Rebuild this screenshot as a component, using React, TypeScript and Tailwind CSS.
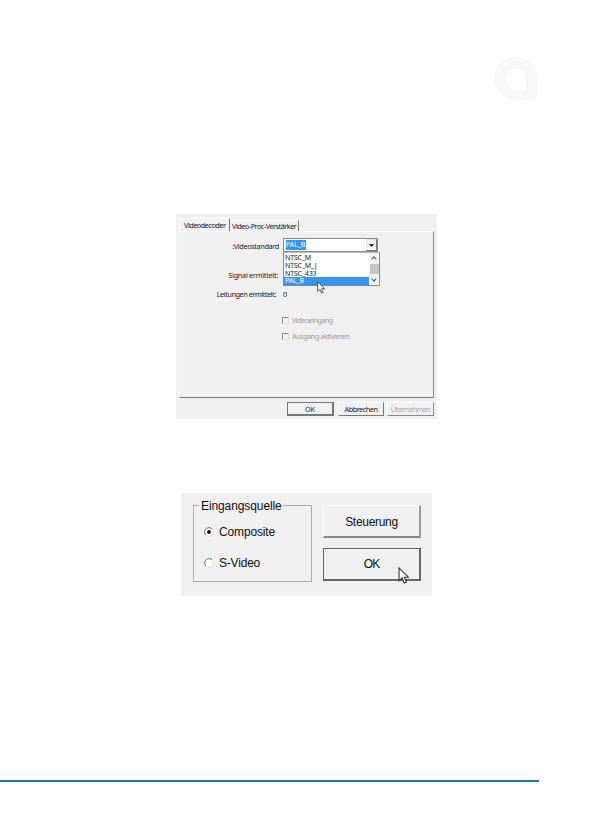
import React from "react";

function Cursor({ className }: { className: string }) {
  return (
    <svg className={className} viewBox="0 0 12 19" fill="#fff" stroke="#333" strokeWidth="1.2">
      <path d="M1 1v14.5l3.4-3.2 2.4 5.5 2.5-1.1-2.4-5.3h4.6z" />
    </svg>
  );
}

function Logo() {
  return (
    <svg className="h-[44px] w-[44px]" viewBox="0 0 44 44" fill="#f8f8f8">
      <path
        fillRule="evenodd"
        d="M22 0C35 0 43 9 43 21v17q0 5-4 5H22C9 43 0 34 0 22S9 0 22 0zM22 12c-6 0-10.500 4.500-10.500 10.500S16 33 22 33h8q2 0 2-2v-9c0-6-4-10-10-10z"
      />
    </svg>
  );
}

function Check({ label, className }: { label: string; className: string }) {
  return (
    <div className="flex h-[8px] items-center gap-[3px] text-[#9b9b9b]">
      <span className="h-[7px] w-[7px] border-t border-l border-[#8c8c8c] border-r border-r-[#e2e2e2] border-b border-b-[#e2e2e2] bg-[#f3f3f3]" />
      <span className={className}>{label}</span>
    </div>
  );
}

function Radio({ label, checked, className }: { label: string; checked?: boolean; className: string }) {
  return (
    <div className="flex h-[12px] items-center">
      <svg className="h-[10px] w-[10px]" viewBox="0 0 10 10">
        <circle cx="5" cy="5" r="4.3" fill="#fff" stroke="#d6d6d6" strokeWidth="0.8" />
        <path d="M1.9 8.1A4.3 4.3 0 0 1 8.1 1.9" fill="none" stroke="#777" strokeWidth="1" />
        {checked && <circle cx="5" cy="5" r="1.9" fill="#111" />}
      </svg>
      <span className={"ml-[5px] " + className}>{label}</span>
    </div>
  );
}

function DecoderDialog() {
  return (
    <section className="ml-[176px] mt-[113px] flex h-[205px] w-[261px] flex-col bg-[#f0f0f0] font-['Noto_Sans',sans-serif] text-[7.3px] leading-[8px] whitespace-nowrap text-[#222]">
      <div className="flex h-[17px] items-end pl-[3px]">
        <div className="flex h-[13px] w-[51px] items-center border-t border-l border-t-[#fafafa] border-l-[#fafafa] border-r border-r-[#777] pl-[4px]">
          <span className="tracking-[-0.5px]">Videodecoder</span>
        </div>
        <div className="flex h-[11px] w-[69px] items-center border-t border-t-[#fafafa] border-r border-r-[#777] pl-[2px]">
          <span className="tracking-[-0.5px]">Video-Proc-Verstärker</span>
        </div>
      </div>
      <div className="ml-[3px] flex h-[167px] w-[255px] flex-col border-t border-l border-t-[#fafafa] border-l-[#f4f4f4] border-r border-r-[#888] border-b border-b-[#777] pt-[6px]">
        <div className="flex h-[14px]">
          <span className="mt-[4px] w-[99px] text-right tracking-[-0.36px]">:Videostandard</span>
          <div className="ml-[4px] flex w-[95px] flex-col">
            <div className="flex h-[14px] shrink-0 justify-between border border-[#8a8a8a] bg-white pl-[2px]">
              <span className="mt-[1px] h-[10px] w-[20px] bg-[#3296f5] text-[7px] leading-[9px] tracking-[-0.1px] text-white">PAL_B</span>
              <span className="flex h-[12px] w-[11px] items-center justify-center border border-[#e4e4e4] border-r-[#777] border-b-[#777] bg-[#f4f4f4]">
                <svg className="h-[3px] w-[5px]" viewBox="0 0 6 3"><path d="M0 0h6L3 3z" fill="#000" /></svg>
              </span>
            </div>
            <div className="relative z-10 flex h-[34px] w-[97px] shrink-0 border border-t-[#bbb] border-[#888] bg-white">
              <div className="w-[85px] pt-px text-[7px] leading-[8px] tracking-[-0.15px]">
                <div className="flex h-[8px] items-center pl-px">NTSC_M</div>
                <div className="flex h-[8px] items-center pl-px">NTSC_M_J</div>
                <div className="flex h-[7px] items-center pl-px">NTSC_433</div>
                <div className="flex h-[8px] items-center bg-[#3296f5] pl-px text-white">PAL_B</div>
              </div>
              <div className="flex w-[10px] flex-col items-center justify-between bg-[#f2f2f2] py-[3px]">
                <svg className="h-[4px] w-[6px]" viewBox="0 0 6 4"><path d="M.7 3.5L3 .8l2.3 2.7" fill="none" stroke="#555" strokeWidth="1.1" /></svg>
                <span className="h-[10px] w-[9px] bg-[#c6c6c6]" />
                <svg className="h-[4px] w-[6px]" viewBox="0 0 6 4"><path d="M.7 .5L3 3.2 5.3 .5" fill="none" stroke="#555" strokeWidth="1.1" /></svg>
              </div>
              <Cursor className="absolute left-[33px] top-[28px] h-[13px] w-[8px]" />
            </div>
          </div>
        </div>
        <div className="mt-[19px] flex h-[8px]">
          <span className="w-[98px] text-right tracking-[-0.28px]">Signal ermittelt:</span>
        </div>
        <div className="mt-[11px] flex h-[8px]">
          <span className="w-[96px] text-right tracking-[-0.44px]">Leitungen ermittelt:</span>
          <span className="ml-[7px]">0</span>
        </div>
        <div className="mt-[18px] ml-[102px] flex flex-col gap-[8px]">
          <Check label="Videoeingang" className="tracking-[-0.55px]" />
          <Check label="Ausgang aktivieren" className="tracking-[-0.48px]" />
        </div>
      </div>
      <div className="mt-[4px] ml-[111px] flex h-[14px]">
        <button className="h-[14px] w-[47px] border border-[#777] border-r-2 border-b-2 border-r-[#777] border-b-[#777]">OK</button>
        <button className="ml-[4px] h-[14px] w-[46px] border border-[#fafafa] border-r-[#777] border-b-[#777] tracking-[-0.48px]">Abbrechen</button>
        <button className="ml-[3px] h-[14px] w-[47px] border border-[#fafafa] border-r-[#888] border-b-[#888] tracking-[-0.6px] text-[#aaa]">Übernehmen</button>
      </div>
    </section>
  );
}

function SourceDialog() {
  return (
    <section className="mt-[74px] ml-[181px] flex h-[103px] w-[251px] bg-[#f0f0f0] pt-[12px] pl-[12px] font-['Liberation_Sans',sans-serif] text-[12px] leading-[12px] whitespace-nowrap text-[#111]">
      <div className="h-[77px] w-[119px] border border-[#aaa]">
        <div className="-mt-[6px] ml-[5px] w-[84px] bg-[#f0f0f0] pl-[2px] tracking-[-0.1px]">Eingangsquelle</div>
        <div className="mt-[14px] ml-[10px]"><Radio label="Composite" checked className="tracking-[-0.15px]" /></div>
        <div className="mt-[19px] ml-[10px]"><Radio label="S-Video" className="tracking-[-0.2px]" /></div>
      </div>
      <div className="ml-[11px] flex flex-col gap-[10px]">
        <button className="h-[33px] w-[98px] border border-[#fafafa] border-r-2 border-r-[#999] border-b-2 border-b-[#888] pt-px tracking-[-0.3px]">Steuerung</button>
        <button className="relative h-[33px] w-[98px] border border-[#666] border-r-2 border-b-2 tracking-[-0.8px]">
          OK
          <Cursor className="absolute left-[74px] top-[18px] h-[17px] w-[11px]" />
        </button>
      </div>
    </section>
  );
}

export default function App() {
  return (
    <main className="flex h-[839px] w-[595px] flex-col overflow-hidden bg-white">
      <header className="mt-[57px] ml-[494px] h-[44px]"><Logo /></header>
      <DecoderDialog />
      <SourceDialog />
      <div className="mt-[184px] h-[2px] w-[539px] shrink-0 bg-[#1b75bb]" />
    </main>
  );
}
